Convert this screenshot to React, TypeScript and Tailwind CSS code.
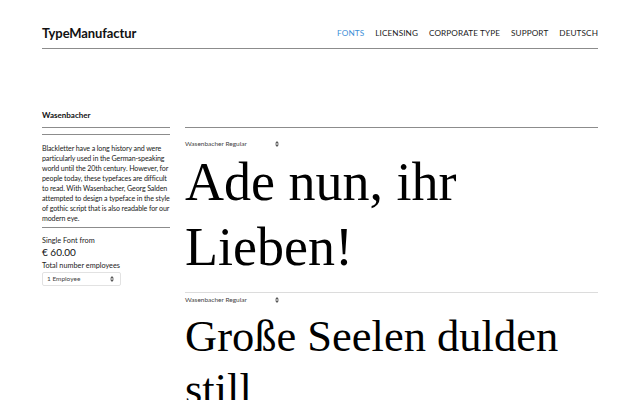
import React from "react";

// Font detail page: header nav, left info column, right specimen column.

const ui = { fontFamily: "Lato, 'Noto Sans', sans-serif" };
const serif = { fontFamily: "'Liberation Serif', 'Times New Roman', serif" };

function Arrows() {
  return (
    <svg width="4" height="6" viewBox="0 0 4 6" className="shrink-0">
      <path d="M2 0 L4 2.4 H0 Z M2 6 L4 3.6 H0 Z" fill="#555" />
    </svg>
  );
}

function FontSelect() {
  return (
    <div className="flex w-[98px] items-center justify-between pr-[4px] text-[6.5px] leading-[10px] text-[#444]">
      <span>Wasenbacher Regular</span>
      <Arrows />
    </div>
  );
}

const nav = ["FONTS", "LICENSING", "CORPORATE TYPE", "SUPPORT", "DEUTSCH"];

export default function App() {
  return (
    <div className="h-[400px] w-[640px] overflow-hidden bg-white px-[42px] text-[#111]" style={ui}>
      <header className="flex items-center justify-between border-b border-[#8c8c8c] pt-[26px] pb-[8px]">
        <h1 className="text-[13px] font-bold leading-[14px] tracking-[-0.1px]">TypeManufactur</h1>
        <nav className="flex gap-[11px] text-[8.2px] leading-[14px] tracking-[0.1px]">
          {nav.map((n, i) => (
            <span key={n} className={i === 0 ? "text-[#3d8fd8]" : "text-[#1a1a1a]"}>
              {n}
            </span>
          ))}
        </nav>
      </header>

      <div className="flex gap-[15px]">
        <aside className="w-[128px] shrink-0 pt-[61px]">
          <h2 className="border-b border-[#8c8c8c] pb-[7px] text-[8px] font-bold leading-[10px]">
            Wasenbacher
          </h2>
          <div className="mt-[6px] border-y border-[#8c8c8c] pt-[9px] pb-[3px]">
            <p className="text-[7.1px] leading-[10px] tracking-[-0.12px] text-[#1a1a1a]">
              Blackletter have a long history and were particularly used in the German-speaking
              world until the 20th century. However, for people today, these typefaces are
              difficult to read. With Wasenbacher, Georg Salden attempted to design a typeface in
              the style of gothic script that is also readable for our modern eye.
            </p>
          </div>
          <div className="mt-[8px] text-[7.3px] leading-[10px] text-[#222]">Single Font from</div>
          <div className="text-[10px] leading-[12px]">€ 60.00</div>
          <div className="mt-[3px] text-[7.3px] leading-[10px] text-[#222]">Total number employees</div>
          <div className="mt-[1px] flex h-[14px] w-[79px] items-center justify-between rounded-[2px] border border-[#e2e2e2] pl-[4px] pr-[6px] text-[6.5px] text-[#444]">
            <span>1 Employee</span>
            <Arrows />
          </div>
        </aside>

        <section className="min-w-0 flex-1 pt-[78px]">
          <div className="border-t border-[#8c8c8c]">
            <div className="mt-[11px]">
              <FontSelect />
            </div>
            <p className="mt-[1px] text-[54px] leading-[65px] text-black" style={serif}>
              Ade nun, ihr Lieben!
            </p>
          </div>
          <div className="mt-[12px] border-t border-[#dcdcdc]">
            <div className="mt-[2px]">
              <FontSelect />
            </div>
            <p className="mt-[5px] text-[44.5px] leading-[53px] text-black" style={serif}>
              Große Seelen dulden still
            </p>
          </div>
        </section>
      </div>
    </div>
  );
}
